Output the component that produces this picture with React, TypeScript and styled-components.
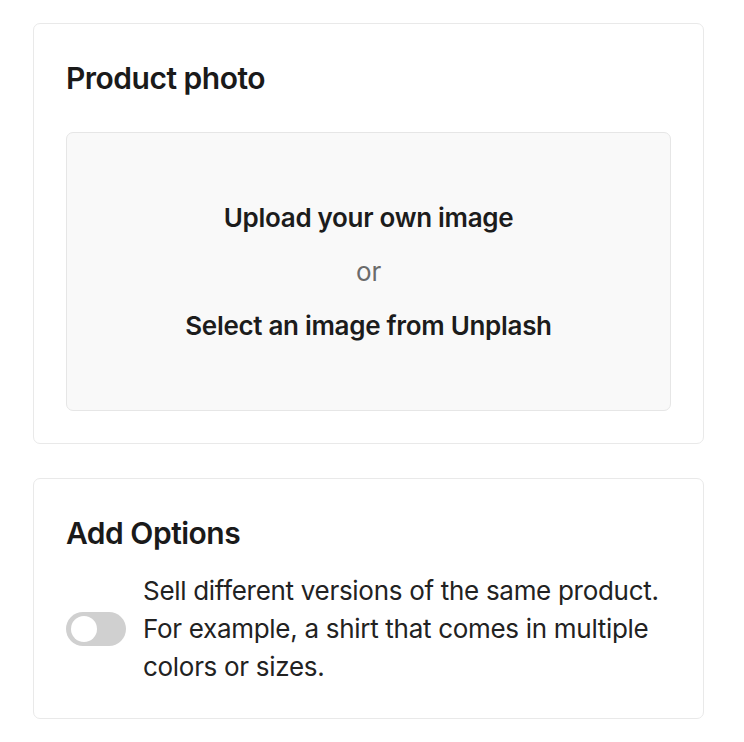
import styled, { createGlobalStyle } from "styled-components";

const GlobalStyle = createGlobalStyle`
  body {
    margin: 0;
    background: #ffffff;
    font-family: "Inter", "Noto Sans", sans-serif;
    color: #1c1c1c;
  }
`;

const Page = styled.div`
  display: flex;
  flex-direction: column;
  gap: 34px;
  padding: 23px 40px 0 33px;
`;

const Card = styled.section`
  border: 1.5px solid #e9e9e9;
  border-radius: 7px;
  padding: 32px;
`;

const Heading = styled.h2`
  margin: 0;
  font-size: 30px;
  font-weight: 600;
  letter-spacing: -0.5px;
  line-height: 44px;
  color: #1a1a1a;
`;

const UploadBox = styled.div`
  margin-top: 32px;
  height: 277px;
  background: #f9f9f9;
  border: 1.5px solid #e6e6e6;
  border-radius: 7px;
  display: flex;
  flex-direction: column;
  align-items: center;
  justify-content: center;
  gap: 16px;
`;

const UploadLink = styled.button<{ $muted?: boolean }>`
  border: 0;
  background: none;
  padding: 0;
  font-family: inherit;
  font-size: 26px;
  line-height: 38px;
  letter-spacing: -0.3px;
  font-weight: ${(p) => (p.$muted ? 400 : 600)};
  color: ${(p) => (p.$muted ? "#6b6b6b" : "#1c1c1c")};
  cursor: ${(p) => (p.$muted ? "default" : "pointer")};
`;

const OptionRow = styled.div`
  display: flex;
  align-items: center;
  gap: 17px;
  margin-top: 17px;
`;

const Toggle = styled.button<{ $on?: boolean }>`
  flex: none;
  position: relative;
  width: 60px;
  height: 34px;
  border: 0;
  border-radius: 17px;
  padding: 0;
  background: ${(p) => (p.$on ? "#1c1c1c" : "#d0d0d0")};
  &::after {
    content: "";
    position: absolute;
    top: 4px;
    left: ${(p) => (p.$on ? "30px" : "5px")};
    width: 26px;
    height: 26px;
    border-radius: 50%;
    background: #ffffff;
  }
`;

const Description = styled.p`
  margin: 0;
  font-size: 26px;
  line-height: 38px;
  letter-spacing: -0.3px;
  color: #222222;
`;

export default function App() {
  return (
    <>
      <GlobalStyle />
      <Page>
        <Card>
          <Heading>Product photo</Heading>
          <UploadBox>
            <UploadLink>Upload your own image</UploadLink>
            <UploadLink $muted>or</UploadLink>
            <UploadLink>Select an image from Unplash</UploadLink>
          </UploadBox>
        </Card>
        <Card>
          <Heading>Add Options</Heading>
          <OptionRow>
            <Toggle aria-label="Add options" />
            <Description>
              Sell different versions of the same product. For example, a shirt
              that comes in multiple colors or sizes.
            </Description>
          </OptionRow>
        </Card>
      </Page>
    </>
  );
}
